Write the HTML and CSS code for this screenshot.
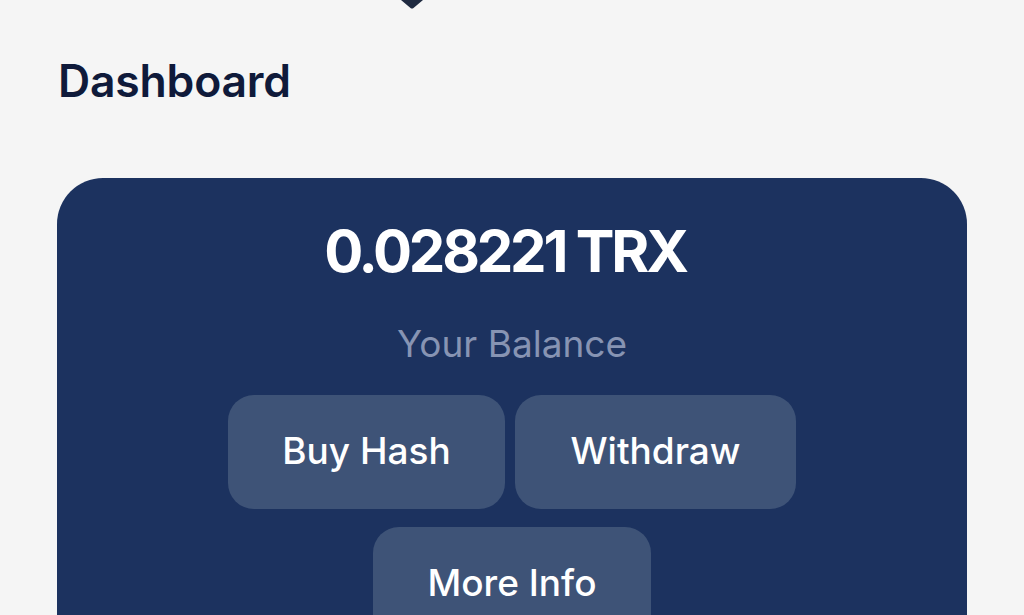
FILE: index.html
```html
<!DOCTYPE html>
<html lang="en">
    <head>
        <meta charset="utf-8">
        <link rel="stylesheet" href="styles.css">
    </head>
    <body>
        <div id="top">
            <svg width="24" height="9" viewBox="0 0 24 9"><path d="M1 0 L10.5 8 Q12 9 13.5 8 L23 0 Z" fill="#1f2a40"/></svg>
        </div>
        <h1 id="title">Dashboard</h1>
        <div id="card">
            <div id="amount">0.028221 TRX</div>
            <div id="label">Your Balance</div>
            <div id="btns">
                <button class="btn btn-buy">Buy Hash</button>
                <button class="btn btn-wd">Withdraw</button>
                <button class="btn btn-info">More Info</button>
            </div>
        </div>
    </body>
</html>
```

FILE: styles.css
```css
*{
	margin: 0;
	padding: 0;
	box-sizing: border-box;
}
body{
	background: #f5f5f5;
	font-family: Inter, "Liberation Sans", sans-serif;
	overflow: hidden;
}
#top{
	height: 9px;
	padding-left: 400px;
	line-height: 0;
}
#top svg{
	display: block;
}
#title{
	margin: 47px 0 0 58px;
	font-size: 44.5px;
	font-weight: 600;
	color: #0f1a3a;
	line-height: 50px;
	letter-spacing: -0.2px;
}
#card{
	margin: 72px 0 0 57px;
	width: 910px;
	height: 500px;
	background: #1c325f;
	border-radius: 46px;
	padding-top: 38px;
	text-align: center;
}
#amount{
	color: #fff;
	font-size: 58px;
	font-weight: 700;
	letter-spacing: -3.2px;
	line-height: 70px;
	padding-right: 14px;
}
#label{
	margin-top: 36px;
	color: #8794b3;
	font-size: 37px;
	line-height: 44px;
}
#btns{
	display: flex;
	flex-wrap: wrap;
	justify-content: center;
	gap: 18px 10px;
	width: 580px;
	margin: 29px auto 0;
}
.btn{
	height: 114px;
	border: none;
	border-radius: 26px;
	background: #3e5377;
	color: #fff;
	font-family: Inter, "Liberation Sans", sans-serif;
	font-size: 37px;
	font-weight: 500;
	padding-bottom: 4px;
}
.btn-buy{
	width: 277px;
}
.btn-wd{
	width: 281px;
}
.btn-info{
	width: 278px;
}
```
